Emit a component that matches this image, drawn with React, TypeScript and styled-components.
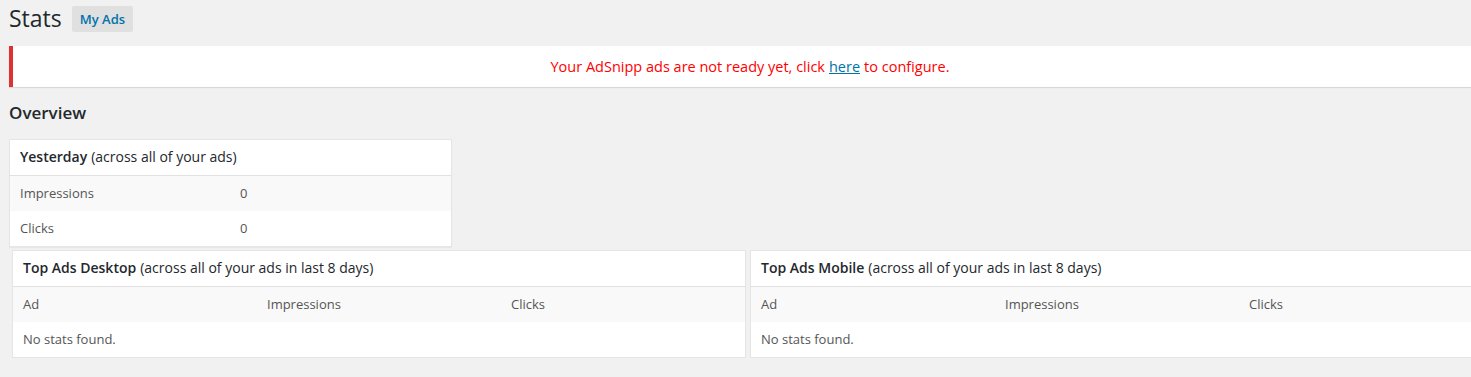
import React from 'react'
import styled, { createGlobalStyle } from 'styled-components'

const GlobalStyle = createGlobalStyle`
  html, body {
    margin: 0;
    padding: 0;
    background: #f1f1f1;
    overflow: hidden;
  }
  body {
    font-family: "Open Sans", "Liberation Sans", sans-serif;
    font-size: 13px;
    line-height: 1.4em;
    color: #444;
  }
`

const Wrap = styled.div`
  width: 1481px;
  padding-left: 9px;
`

const TitleRow = styled.div`
  display: flex;
  align-items: center;
  height: 38px;
`

const PageTitle = styled.h1`
  margin: 0;
  font-size: 23px;
  font-weight: 400;
  line-height: 29px;
  color: #23282d;
  padding-bottom: 1px;
`

const TitleAction = styled.a`
  margin-left: 10px;
  padding: 0 8px;
  height: 26px;
  line-height: 26px;
  background: #e0e0e0;
  border-radius: 2px;
  color: #0073aa;
  font-size: 13px;
  font-weight: 600;
  text-decoration: none;
`

const Notice = styled.div`
  margin-top: 8px;
  background: #fff;
  border-left: 4px solid #dc3232;
  box-shadow: 0 1px 1px 0 rgba(0, 0, 0, 0.1);
  height: 41px;
  display: flex;
  align-items: center;
  justify-content: center;
  padding-right: 3px;
  padding-top: 2px;
  box-sizing: border-box;
  color: #ff0000;
  font-size: 14.5px;
`

const NoticeLink = styled.a`
  color: #0073aa;
  text-decoration: underline;
  margin: 0 4px;
`

const SectionTitle = styled.h2`
  margin: 16px 0 0;
  font-size: 17px;
  font-weight: 600;
  color: #23282d;
  line-height: 20px;
`

const Card = styled.div<{ $width: number }>`
  width: ${p => p.$width}px;
  background: #fff;
  border: 1px solid #e5e5e5;
  box-shadow: 0 1px 1px rgba(0, 0, 0, 0.04);
  box-sizing: border-box;
`

const CardHeader = styled.div`
  height: 35px;
  padding: 0 10px;
  display: flex;
  align-items: center;
  border-bottom: 1px solid #e1e1e1;
  font-size: 14px;
  color: #23282d;
`

const Strong = styled.span`
  font-weight: 600;
  margin-right: 4px;
`

const Row = styled.div<{ $alt?: boolean }>`
  display: flex;
  height: 35px;
  align-items: center;
  background: ${p => (p.$alt ? '#f9f9f9' : '#fff')};
  color: #555;
  font-size: 13px;
`

const Cell = styled.div<{ $width?: number }>`
  padding: 0 10px;
  width: ${p => (p.$width ? `${p.$width}px` : 'auto')};
  flex: ${p => (p.$width ? 'none' : '1')};
  box-sizing: border-box;
`

const YesterdayWrap = styled.div`
  margin-top: 16px;
`

const CardRow = styled.div`
  display: flex;
  gap: 4px;
  margin-top: 3px;
  margin-left: 3px;
`

const TopAds = ({ title }: { title: string }) => (
  <Card $width={734}>
    <CardHeader>
      <Strong>{title}</Strong>(across all of your ads in last 8 days)
    </CardHeader>
    <Row $alt>
      <Cell $width={244}>Ad</Cell>
      <Cell $width={244}>Impressions</Cell>
      <Cell>Clicks</Cell>
    </Row>
    <Row>
      <Cell>No stats found.</Cell>
    </Row>
  </Card>
)

const App = () => {
  return (
    <Wrap>
      <GlobalStyle />
      <TitleRow>
        <PageTitle>Stats</PageTitle>
        <TitleAction href="#">My Ads</TitleAction>
      </TitleRow>
      <Notice>
        Your AdSnipp ads are not ready yet, click<NoticeLink href="#">here</NoticeLink>to configure.
      </Notice>
      <SectionTitle>Overview</SectionTitle>
      <YesterdayWrap>
        <Card $width={443}>
          <CardHeader>
            <Strong>Yesterday</Strong>(across all of your ads)
          </CardHeader>
          <Row $alt>
            <Cell $width={220}>Impressions</Cell>
            <Cell>0</Cell>
          </Row>
          <Row>
            <Cell $width={220}>Clicks</Cell>
            <Cell>0</Cell>
          </Row>
        </Card>
      </YesterdayWrap>
      <CardRow>
        <TopAds title="Top Ads Desktop" />
        <TopAds title="Top Ads Mobile" />
      </CardRow>
    </Wrap>
  )
}

export default App
